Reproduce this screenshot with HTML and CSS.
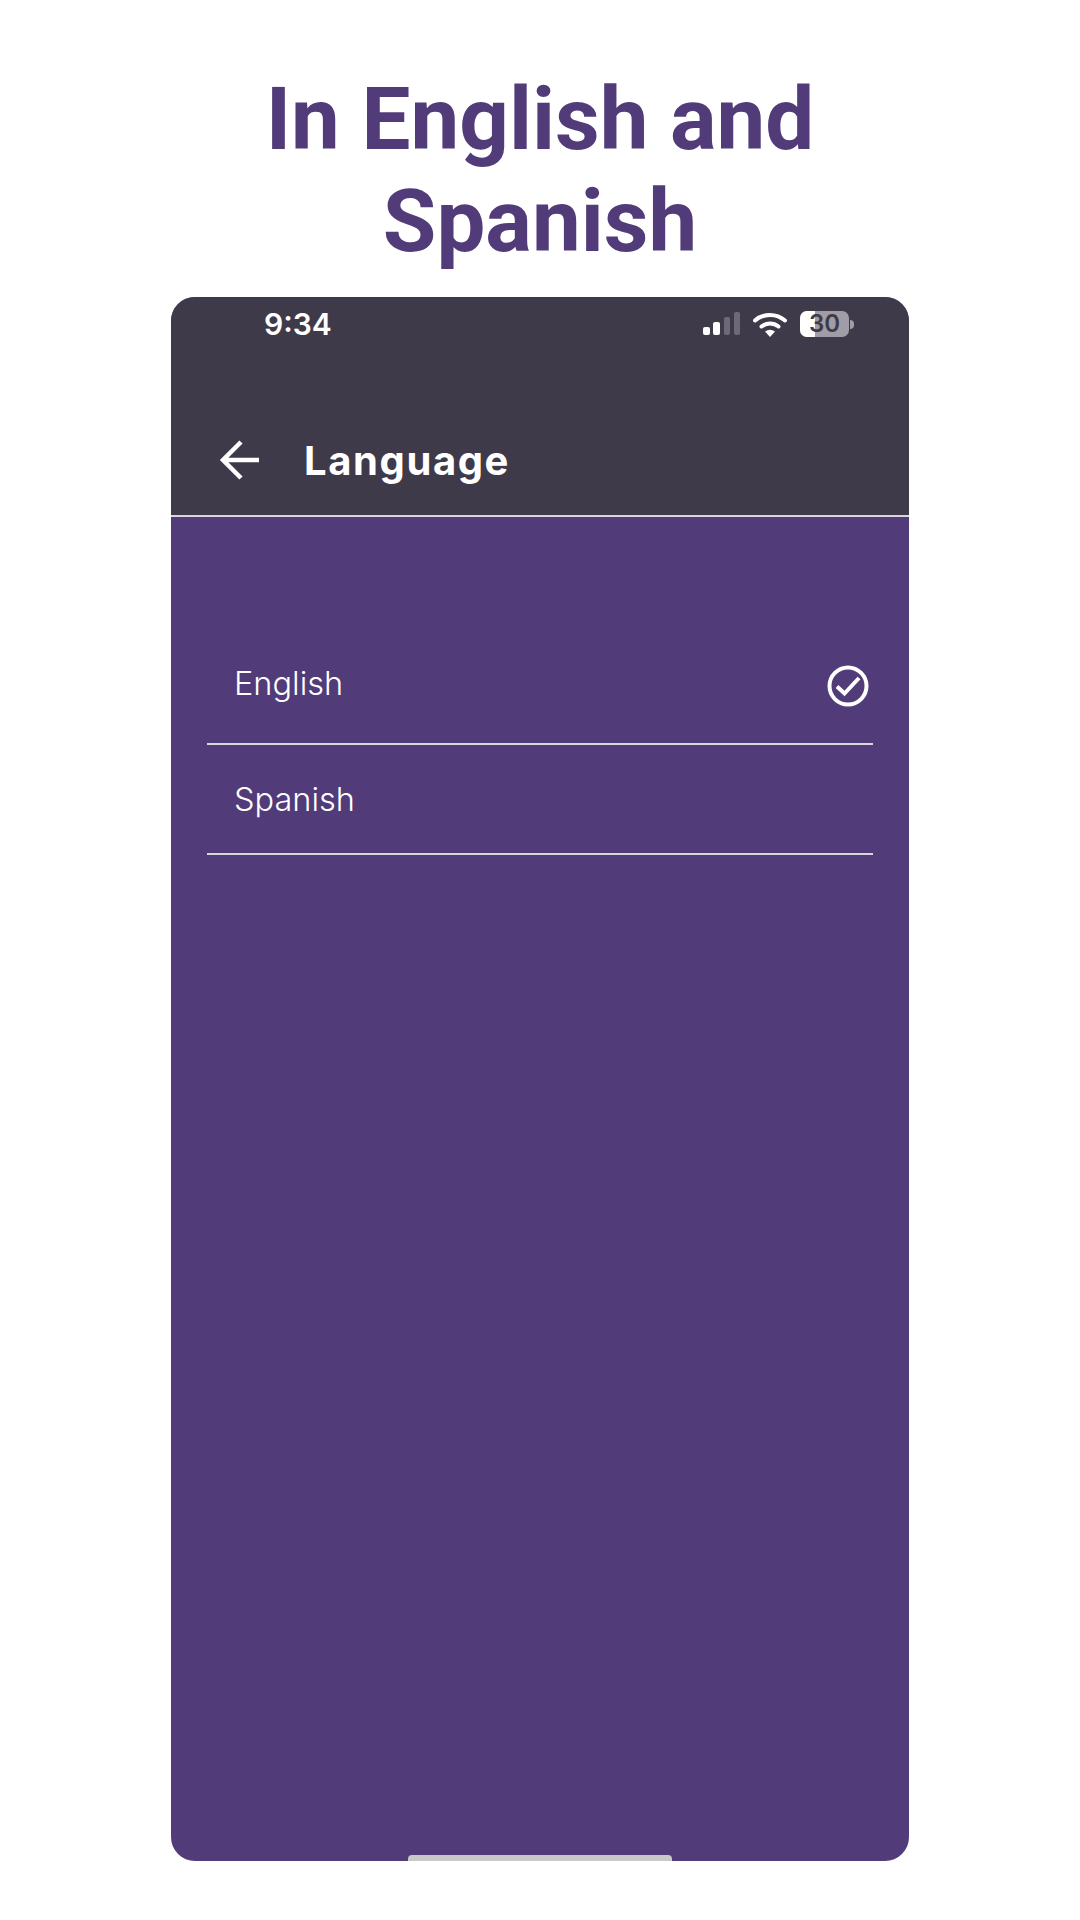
FILE: index.html
```html
<!DOCTYPE html>
<html lang="en">
<head>
    <meta charset="UTF-8">
    <meta name="viewport" content="width=device-width, initial-scale=1.0">
    <title>In English and Spanish</title>
    <link rel="stylesheet" href="styles.css">
</head>
<body>
    <h1 class="headline">In English and<br>Spanish</h1>

    <div class="phone">
        <div class="topbar">
            <div class="status">
                <span class="time">9:34</span>
                <div class="status-icons">
                    <svg class="signal" width="38" height="24" viewBox="0 0 38 24">
                        <rect x="0" y="15" width="7" height="8" rx="2" fill="#fff"/>
                        <rect x="10" y="10" width="7" height="13" rx="2" fill="#fff"/>
                        <rect x="21" y="5" width="6" height="18" rx="2" fill="#6d6977"/>
                        <rect x="31" y="0" width="6" height="23" rx="2" fill="#6d6977"/>
                    </svg>
                    <svg class="wifi" width="34" height="25" viewBox="0 0 34 25">
                        <path d="M2 8.500C10.500 1 23.500 1 32 8.500" fill="none" stroke="#fff" stroke-width="4" stroke-linecap="round"/>
                        <path d="M8.500 14.500C13.500 10.500 20.500 10.500 25.500 14.500" fill="none" stroke="#fff" stroke-width="4" stroke-linecap="round"/>
                        <path d="M12 19.500Q17 16 22 19.500L17 25Z" fill="#fff"/>
                    </svg>
                    <div class="battery">
                        <div class="battery-body">
                            <div class="battery-fill"></div>
                            <span class="battery-num">30</span>
                        </div>
                        <div class="battery-cap"></div>
                    </div>
                </div>
            </div>
            <div class="appbar">
                <svg class="back" width="40" height="40" viewBox="0 0 40 40">
                    <path d="M40 20H4M22 2L4 20L22 38" fill="none" stroke="#fff" stroke-width="4.500"/>
                </svg>
                <span class="appbar-title">Language</span>
            </div>
        </div>

        <ul class="lang-list">
            <li class="lang-row lang-row-first">
                <span class="lang-name-raised">English</span>
                <svg class="check" width="42" height="42" viewBox="0 0 42 42">
                    <circle cx="21" cy="21" r="18.500" fill="none" stroke="#fff" stroke-width="4"/>
                    <path d="M10 21.500L17.500 28.500L32 13" fill="none" stroke="#fff" stroke-width="4"/>
                </svg>
            </li>
            <li class="lang-row">
                <span>Spanish</span>
            </li>
        </ul>

        <div class="home-bar"></div>
    </div>
</body>
</html>
```

FILE: styles.css
```css
body {
    margin: 0;
    background-color: #ffffff;
    font-family: Inter, "Liberation Sans", sans-serif;
}
.headline {
    margin: 0 0 25px;
    padding-top: 68px;
    font-family: Roboto, "Liberation Sans", sans-serif;
    font-size: 87px;
    font-weight: 700;
    line-height: 102px;
    text-align: center;
    color: #513c79;
}
.phone {
    position: relative;
    display: flex;
    flex-direction: column;
    width: 738px;
    height: 1564px;
    margin: 0 auto;
    background-color: #513c79;
    border-radius: 24px;
    overflow: hidden;
}
.topbar {
    height: 218px;
    background-color: #3e3a4a;
    border-bottom: 2px solid #d8d6dc;
}
.status {
    display: flex;
    justify-content: space-between;
    align-items: center;
    height: 54px;
    padding: 0 55px 0 93px;
}
.time {
    font-size: 30px;
    font-weight: 600;
    color: #ffffff;
}
.status-icons {
    display: flex;
    align-items: center;
    gap: 12px;
}
.battery {
    display: flex;
    align-items: center;
    margin-left: 1px;
}
.battery-body {
    position: relative;
    width: 49px;
    height: 26px;
    background-color: #a09da6;
    border-radius: 7px;
}
.battery-fill {
    width: 15px;
    height: 100%;
    background-color: #ffffff;
    border-radius: 7px 0 0 7px;
}
.battery-num {
    position: absolute;
    top: 0;
    left: 0;
    width: 100%;
    font-size: 24px;
    font-weight: 600;
    line-height: 26px;
    text-align: center;
    color: #3e3a4a;
}
.battery-cap {
    width: 4px;
    height: 9px;
    margin-left: 1px;
    background-color: #a09da6;
    border-radius: 0 4px 4px 0;
}
.appbar {
    display: flex;
    align-items: center;
    gap: 45px;
    height: 112px;
    margin-top: 53px;
    padding-left: 48px;
}
.appbar-title {
    font-size: 40px;
    font-weight: 700;
    letter-spacing: 1.600px;
    color: #ffffff;
}
.lang-list {
    margin: 0 36px;
    padding: 112px 0 0;
    list-style: none;
}
.lang-row {
    display: flex;
    justify-content: space-between;
    align-items: center;
    height: 108px;
    padding: 0 4px 0 27px;
    border-bottom: 2px solid #d8d6dc;
    font-size: 32.500px;
    font-weight: 300;
    color: #ffffff;
}
.lang-row-first {
    height: 114px;
}
.lang-name-raised {
    margin-bottom: 6px;
}
.home-bar {
    position: absolute;
    bottom: 0;
    left: 237px;
    width: 264px;
    height: 6px;
    background-color: #c8c8c8;
    border-radius: 4px 4px 0 0;
}
```
